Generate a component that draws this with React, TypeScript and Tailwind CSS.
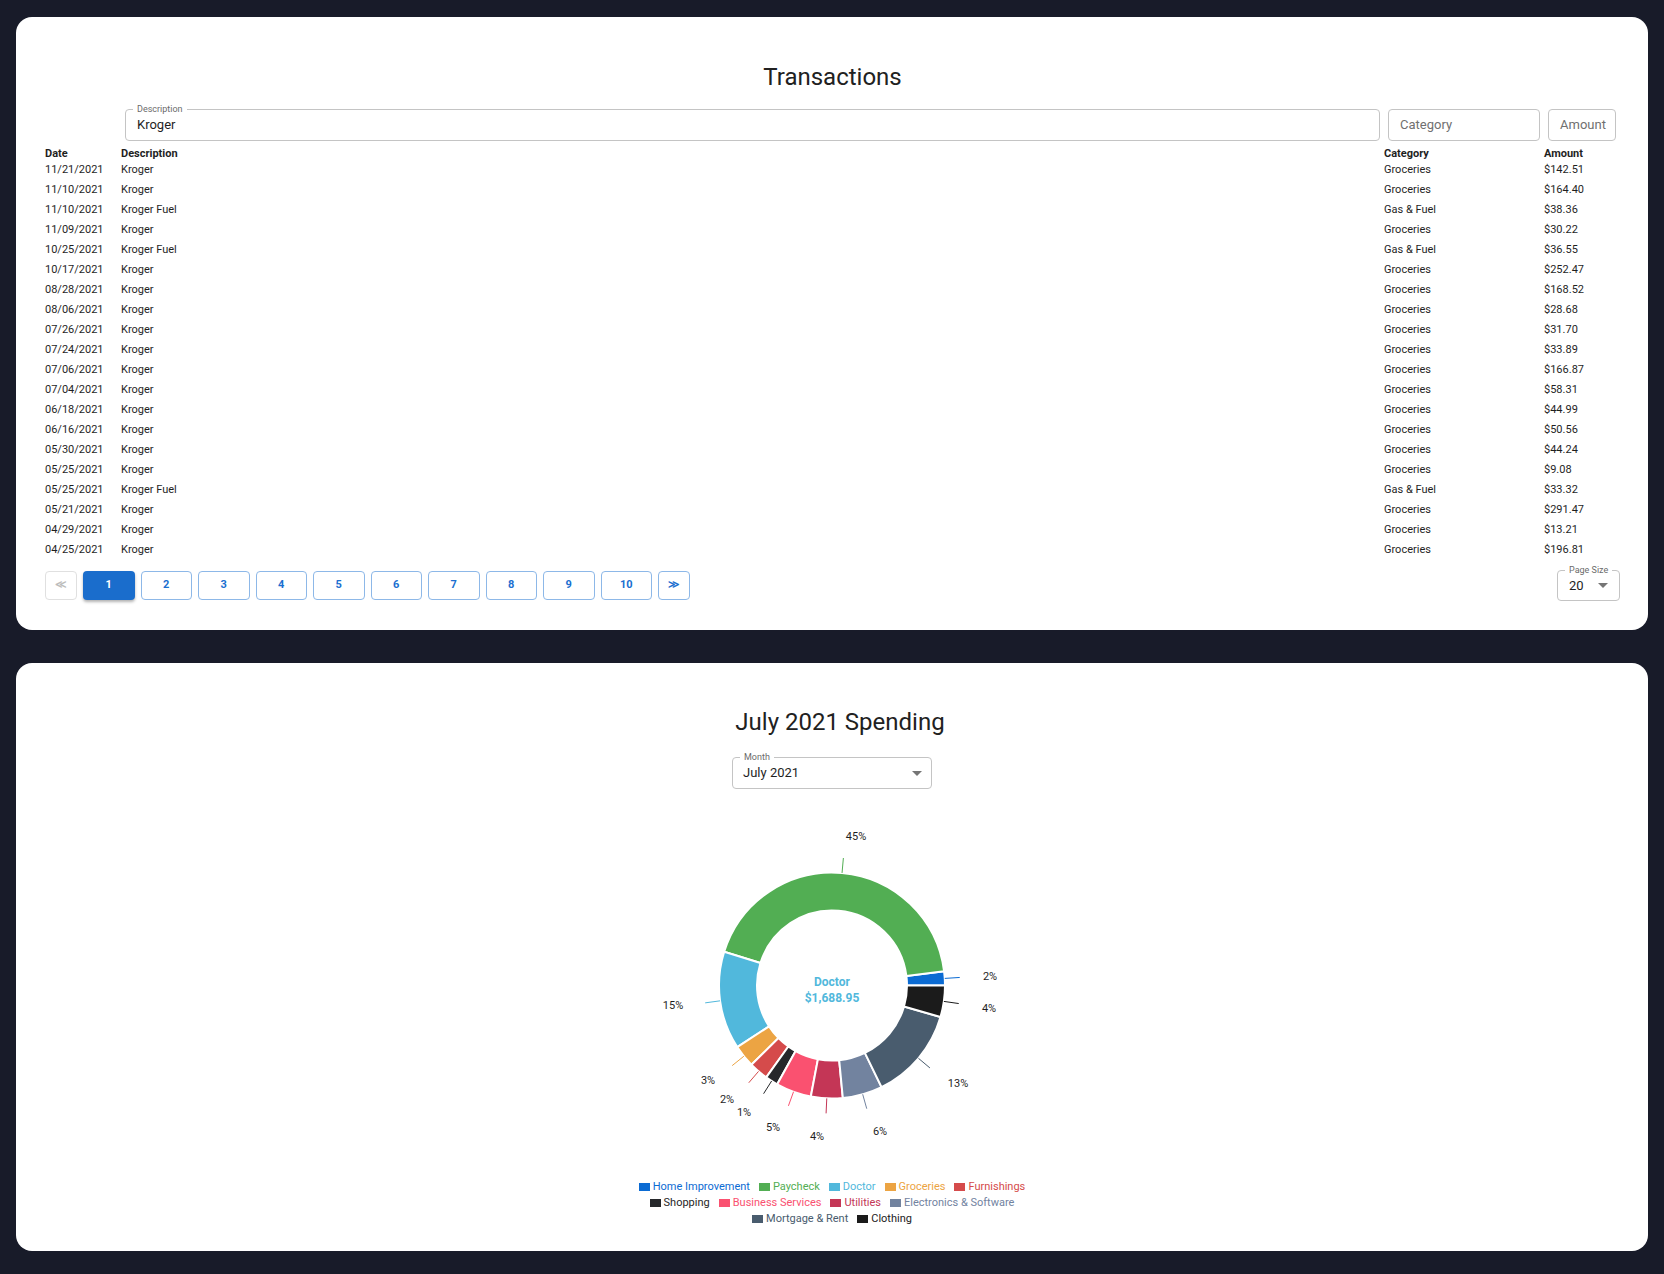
import React from 'react';

/**
 * Budget dashboard: transaction search table + monthly spending donut.
 */

interface Txn {
  date: string;
  description: string;
  category: string;
  amount: string;
}

const transactions: Txn[] = [
  { date: '11/21/2021', description: 'Kroger', category: 'Groceries', amount: '$142.51' },
  { date: '11/10/2021', description: 'Kroger', category: 'Groceries', amount: '$164.40' },
  { date: '11/10/2021', description: 'Kroger Fuel', category: 'Gas & Fuel', amount: '$38.36' },
  { date: '11/09/2021', description: 'Kroger', category: 'Groceries', amount: '$30.22' },
  { date: '10/25/2021', description: 'Kroger Fuel', category: 'Gas & Fuel', amount: '$36.55' },
  { date: '10/17/2021', description: 'Kroger', category: 'Groceries', amount: '$252.47' },
  { date: '08/28/2021', description: 'Kroger', category: 'Groceries', amount: '$168.52' },
  { date: '08/06/2021', description: 'Kroger', category: 'Groceries', amount: '$28.68' },
  { date: '07/26/2021', description: 'Kroger', category: 'Groceries', amount: '$31.70' },
  { date: '07/24/2021', description: 'Kroger', category: 'Groceries', amount: '$33.89' },
  { date: '07/06/2021', description: 'Kroger', category: 'Groceries', amount: '$166.87' },
  { date: '07/04/2021', description: 'Kroger', category: 'Groceries', amount: '$58.31' },
  { date: '06/18/2021', description: 'Kroger', category: 'Groceries', amount: '$44.99' },
  { date: '06/16/2021', description: 'Kroger', category: 'Groceries', amount: '$50.56' },
  { date: '05/30/2021', description: 'Kroger', category: 'Groceries', amount: '$44.24' },
  { date: '05/25/2021', description: 'Kroger', category: 'Groceries', amount: '$9.08' },
  { date: '05/25/2021', description: 'Kroger Fuel', category: 'Gas & Fuel', amount: '$33.32' },
  { date: '05/21/2021', description: 'Kroger', category: 'Groceries', amount: '$291.47' },
  { date: '04/29/2021', description: 'Kroger', category: 'Groceries', amount: '$13.21' },
  { date: '04/25/2021', description: 'Kroger', category: 'Groceries', amount: '$196.81' },
];

interface Slice {
  name: string;
  color: string;
  box: string;
  text: string;
  start: number;
  end: number;
  label: string;
  lx: number;
  ly: number;
}

// angles in degrees, counter-clockwise from 3 o'clock
const slices: Slice[] = [
  { name: 'Home Improvement', color: '#0b6bd3', box: 'bg-[#0b6bd3]', text: 'text-[#0b6bd3]', start: 0, end: 7.2, label: '2%', lx: 158, ly: -9.5 },
  { name: 'Paycheck', color: '#52ae53', box: 'bg-[#52ae53]', text: 'text-[#52ae53]', start: 7.2, end: 162.6, label: '45%', lx: 24, ly: -149.5 },
  { name: 'Doctor', color: '#51b8dc', box: 'bg-[#51b8dc]', text: 'text-[#51b8dc]', start: 162.6, end: 213, label: '15%', lx: -159, ly: 19.5 },
  { name: 'Groceries', color: '#eca443', box: 'bg-[#eca443]', text: 'text-[#eca443]', start: 213, end: 224.5, label: '3%', lx: -124, ly: 94.5 },
  { name: 'Furnishings', color: '#d54b4b', box: 'bg-[#d54b4b]', text: 'text-[#d54b4b]', start: 224.5, end: 234.4, label: '2%', lx: -105, ly: 113.5 },
  { name: 'Shopping', color: '#26282b', box: 'bg-[#26282b]', text: 'text-[#1f1f1f]', start: 234.4, end: 241, label: '1%', lx: -88, ly: 126.5 },
  { name: 'Business Services', color: '#fa5170', box: 'bg-[#fa5170]', text: 'text-[#fa5170]', start: 241, end: 259.2, label: '5%', lx: -59, ly: 141.5 },
  { name: 'Utilities', color: '#c43656', box: 'bg-[#c43656]', text: 'text-[#c43656]', start: 259.2, end: 275.5, label: '4%', lx: -15, ly: 150.5 },
  { name: 'Electronics & Software', color: '#72839f', box: 'bg-[#72839f]', text: 'text-[#72839f]', start: 275.5, end: 296, label: '6%', lx: 48, ly: 145.5 },
  { name: 'Mortgage & Rent', color: '#495c6e', box: 'bg-[#495c6e]', text: 'text-[#495c6e]', start: 296, end: 343.8, label: '13%', lx: 126, ly: 97.5 },
  { name: 'Clothing', color: '#1b1b1b', box: 'bg-[#1b1b1b]', text: 'text-[#1b1b1b]', start: 343.8, end: 360, label: '4%', lx: 157, ly: 22.5 },
];

const legendRows = [
  slices.slice(0, 5),
  slices.slice(5, 9),
  slices.slice(9, 11),
];

const CX = 210;
const CY = 180.5;
const R_OUT = 113;
const R_IN = 75;

function pt(r: number, deg: number) {
  const a = (deg * Math.PI) / 180;
  return [CX + r * Math.cos(a), CY - r * Math.sin(a)];
}

function arcPath(start: number, end: number) {
  const [x0, y0] = pt(R_OUT, start);
  const [x1, y1] = pt(R_OUT, end);
  const [x2, y2] = pt(R_IN, end);
  const [x3, y3] = pt(R_IN, start);
  const large = end - start > 180 ? 1 : 0;
  return `M${x0} ${y0} A${R_OUT} ${R_OUT} 0 ${large} 0 ${x1} ${y1} L${x2} ${y2} A${R_IN} ${R_IN} 0 ${large} 1 ${x3} ${y3} Z`;
}

function Caret() {
  return (
    <svg width="10" height="5" viewBox="0 0 10 5" className="shrink-0">
      <path d="M0 0 L10 0 L5 5 Z" fill="#757575" />
    </svg>
  );
}

function OutlinedField({
  label,
  value,
  placeholder,
  className,
}: {
  label?: string;
  value?: string;
  placeholder?: string;
  className?: string;
}) {
  return (
    <div className={`relative h-8 rounded border border-[#c4c4c4] flex items-center pl-[11px] ${className ?? ''}`}>
      {label && (
        <span className="absolute -top-[7px] left-[7px] bg-white px-[4px] text-[9px] leading-[12px] text-[#6b6b6b]">
          {label}
        </span>
      )}
      {value ? (
        <span className="text-[13px] text-[#1f1f1f]">{value}</span>
      ) : (
        <span className="text-[13px] text-[#707070]">{placeholder}</span>
      )}
    </div>
  );
}

function PageButton({ children, active, disabled, narrow }: { children: React.ReactNode; active?: boolean; disabled?: boolean; narrow?: boolean }) {
  const width = narrow ? 'w-[32px]' : 'w-[51.5px]';
  let tone = 'border border-[#8db8e8] text-[#1a6fd0] bg-white';
  if (active) tone = 'bg-[#1a6dcc] text-white shadow-[0_2px_3px_rgba(0,0,0,0.3)]';
  if (disabled) tone = 'border border-[#e0e0e0] text-[#bdbdbd] bg-white';
  return (
    <button className={`${width} h-[29px] rounded flex items-center justify-center text-[11px] font-bold ${tone}`}>
      {children}
    </button>
  );
}

function TransactionsCard() {
  return (
    <section className="mx-4 bg-white rounded-2xl pt-[44px] pb-[29px] pl-[29px] pr-7">
      <h1 className="text-2xl leading-8 text-center text-[#212121]">Transactions</h1>

      <div className="mt-[16px] grid grid-cols-[76px_1fr_160px_76px]">
        <div />
        <OutlinedField className="mx-1" label="Description" value="Kroger" />
        <OutlinedField className="mx-1" placeholder="Category" />
        <OutlinedField className="mx-1" placeholder="Amount" />
      </div>

      <div className="mt-[5px] grid grid-cols-[76px_1fr_160px_76px] h-[14px] items-center text-[11px] font-bold text-[#1f1f1f]">
        <div>Date</div>
        <div>Description</div>
        <div>Category</div>
        <div>Amount</div>
      </div>

      <div className="flex flex-col">
        {transactions.map((t, i) => (
          <div key={i} className="grid grid-cols-[76px_1fr_160px_76px] h-5 items-center text-[11px] text-[#1f1f1f]">
            <div>{t.date}</div>
            <div>{t.description}</div>
            <div>{t.category}</div>
            <div>{t.amount}</div>
          </div>
        ))}
      </div>

      <div className="mt-[10px] flex items-end justify-between">
        <div className="flex gap-[6px] mb-px">
          <PageButton narrow disabled>≪</PageButton>
          <PageButton active>1</PageButton>
          {[2, 3, 4, 5, 6, 7, 8, 9, 10].map((n) => (
            <PageButton key={n}>{n}</PageButton>
          ))}
          <PageButton narrow>≫</PageButton>
        </div>
        <div className="relative w-[63px] h-[31px] rounded border border-[#c4c4c4] flex items-center justify-between pl-[11px] pr-[11px]">
          <span className="absolute -top-[7px] left-[7px] bg-white px-[4px] text-[9px] leading-[12px] text-[#6b6b6b]">
            Page Size
          </span>
          <span className="text-[13px] text-[#1f1f1f]">20</span>
          <Caret />
        </div>
      </div>
    </section>
  );
}

function SpendingDonut() {
  return (
    <svg width="420" height="360" viewBox="0 0 420 360" className="block">
      {slices.map((s) => (
        <path key={s.name} d={arcPath(s.start, s.end)} fill={s.color} stroke="#ffffff" strokeWidth="2" strokeLinejoin="round" />
      ))}
      {slices.map((s) => {
        const mid = (s.start + s.end) / 2;
        const [x0, y0] = pt(R_OUT, mid);
        const [x1, y1] = pt(R_OUT + 15, mid);
        return <line key={`t-${s.name}`} x1={x0} y1={y0} x2={x1} y2={y1} stroke={s.color} strokeWidth="1" />;
      })}
      {slices.map((s) => (
        <text
          key={`l-${s.name}`}
          x={CX + s.lx}
          y={CY + s.ly}
          textAnchor="middle"
          dominantBaseline="central"
          fontSize="11"
          fill="#1f1f1f"
        >
          {s.label}
        </text>
      ))}
      <text x={CX} y={CY - 3.5} textAnchor="middle" dominantBaseline="central" fontSize="12" fontWeight="bold" fill="#51b8dc">
        Doctor
      </text>
      <text x={CX} y={CY + 12.5} textAnchor="middle" dominantBaseline="central" fontSize="12" fontWeight="bold" fill="#51b8dc">
        $1,688.95
      </text>
    </svg>
  );
}

function SpendingCard() {
  return (
    <section className="mx-4 mt-[33px] bg-white rounded-2xl pt-[43px] pb-6 flex flex-col items-center">
      <h2 className="pl-4 text-2xl leading-8 text-center text-[#212121]">July 2021 Spending</h2>

      <div className="mt-[19px] relative w-[200px] h-8 rounded border border-[#c4c4c4] flex items-center justify-between pl-[10px] pr-[9px]">
        <span className="absolute -top-[7px] left-[7px] bg-white px-[4px] text-[9px] leading-[12px] text-[#6b6b6b]">
          Month
        </span>
        <span className="text-[13px] text-[#1f1f1f]">July 2021</span>
        <Caret />
      </div>

      <div className="mt-[16px]">
        <SpendingDonut />
      </div>

      <div className="mt-[14px] flex flex-col items-center">
        {legendRows.map((row, i) => (
          <div key={i} className="h-4 flex items-center gap-[9px]">
            {row.map((s) => (
              <div key={s.name} className="flex items-center gap-[3px]">
                <span className={`w-[11px] h-[8px] ${s.box}`} />
                <span className={`text-[11px] leading-4 ${s.text}`}>{s.name}</span>
              </div>
            ))}
          </div>
        ))}
      </div>
    </section>
  );
}

export default function App() {
  return (
    <div className="min-h-screen bg-[#181b29] pt-[17px] pb-6 font-['Roboto',_'Liberation_Sans',_sans-serif]">
      <TransactionsCard />
      <SpendingCard />
    </div>
  );
}
